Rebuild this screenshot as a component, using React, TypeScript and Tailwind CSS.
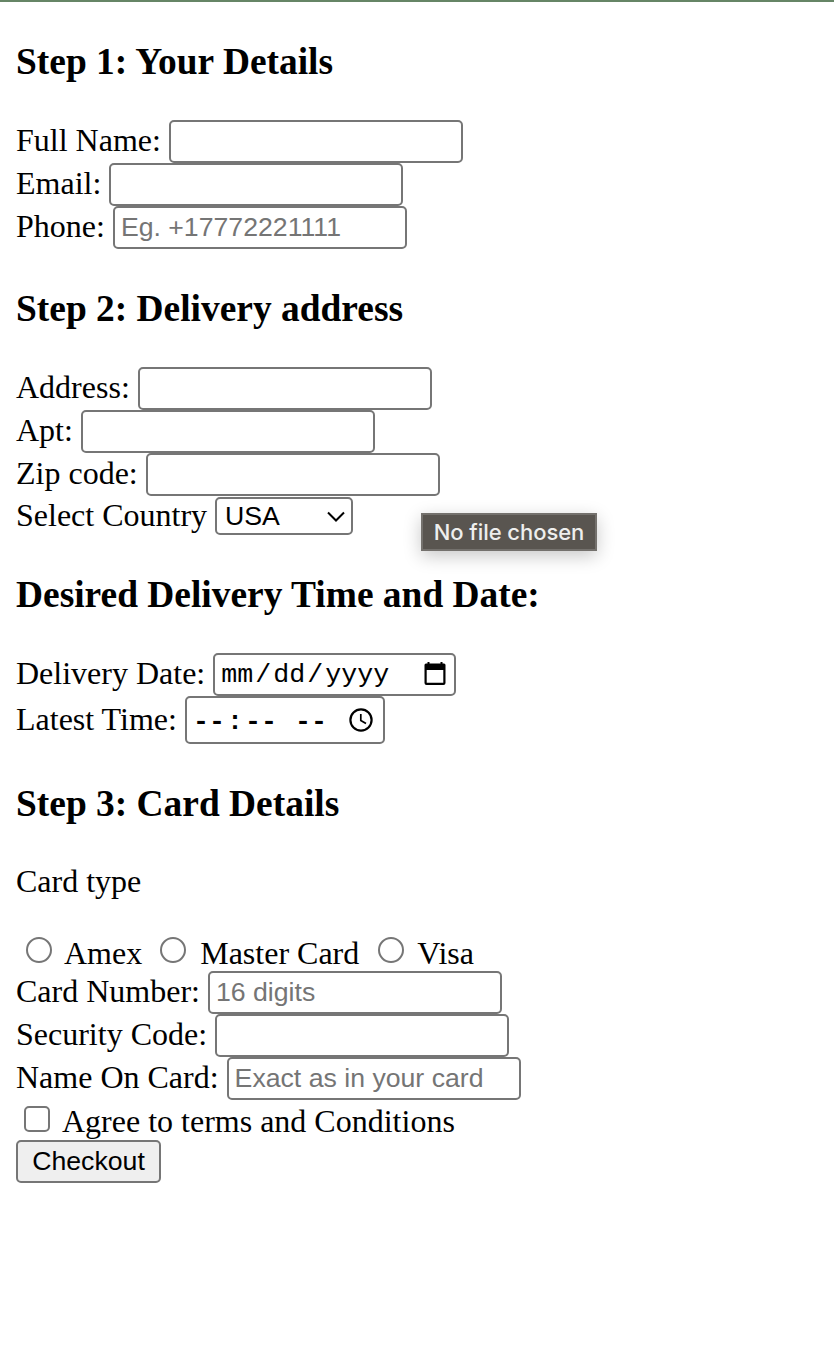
import type { ReactNode } from "react";

function Heading({ className, children }: { className: string; children: ReactNode }) {
  return <h3 className={`text-[37.44px] leading-[43px] font-bold whitespace-nowrap ${className}`}>{children}</h3>;
}

function TextRow({ label, placeholder }: { label: string; placeholder?: string }) {
  return (
    <label className="flex h-[43px] items-start leading-10 whitespace-nowrap">
      {label}
      <input
        type="text"
        placeholder={placeholder}
        className="ml-2 h-[43px] w-[294px] rounded-[5px] border-2 border-[#767676] bg-white px-1.5 pb-px font-['Liberation_Sans',Arial,sans-serif] text-[26.67px] leading-8 placeholder:text-[#757575]"
      />
    </label>
  );
}

function CalendarIcon() {
  return (
    <svg width="22" height="24" viewBox="0 0 22 24" fill="none">
      <path d="M4.500 0v4M17.500 0v4" stroke="#000" strokeWidth="2" />
      <path d="M2 1.500h18a1.500 1.500 0 0 1 1.500 1.500V21a2 2 0 0 1-2 2h-17a2 2 0 0 1-2-2V3A1.500 1.500 0 0 1 2 1.500ZM2.700 8v12.800h16.600V8Z" fill="#000" fillRule="evenodd" />
    </svg>
  );
}

function ClockIcon() {
  return (
    <svg width="24" height="24" viewBox="0 0 24 24" fill="none" stroke="#000">
      <circle cx="12" cy="12" r="10.600" strokeWidth="2.200" />
      <path d="M11.800 6v6.500l5.200 3.100" strokeWidth="1.700" />
    </svg>
  );
}

function Radio({ label, className }: { label: string; className: string }) {
  return (
    <label className={`flex items-start ${className}`}>
      <input type="radio" name="card" className="mt-0.5 size-[26px] shrink-0 appearance-none rounded-full border-2 border-[#767676] bg-white" />
      {label}
    </label>
  );
}

export default function App() {
  return (
    <main className="relative h-[1346px] w-[834px] overflow-hidden border-t-2 border-[#668566] bg-white pl-4 font-['Liberation_Serif','Times_New_Roman',serif] text-[32px] text-black">
      <form>
        <Heading className="mt-[38px]">Step 1: Your Details</Heading>
        <div className="mt-[37px]">
          <TextRow label="Full Name:" />
          <TextRow label="Email:" />
          <TextRow label="Phone:" placeholder="Eg. +17772221111" />
        </div>

        <Heading className="mt-[38px]">Step 2: Delivery address</Heading>
        <div className="mt-[37px]">
          <TextRow label="Address:" />
          <TextRow label="Apt:" />
          <TextRow label="Zip code:" />
          <div className="flex h-[39px] items-start leading-[38px] whitespace-nowrap">
            Select Country
            <button type="button" className="mt-px ml-2 flex h-[38px] w-[138px] items-center justify-between rounded-[5px] border-2 border-[#767676] bg-white pr-1.5 pb-px pl-2 font-['Liberation_Sans',Arial,sans-serif] text-[26.67px] leading-8">
              <span>USA</span>
              <svg width="18" height="12" viewBox="0 0 18 12" fill="none">
                <path d="m1 2.500 8 8 8-8" stroke="#000" strokeWidth="2" />
              </svg>
            </button>
          </div>
        </div>

        <Heading className="mt-[38px]">Desired Delivery Time and Date:</Heading>
        <div className="mt-[37px]">
          <div className="flex h-[43px] items-start leading-10 whitespace-nowrap">
            Delivery Date:
            <div className="ml-2 flex h-[43px] w-[243px] items-center justify-between rounded-[5px] border-2 border-[#767676] pr-2 pb-px pl-1.5">
              <div className="flex gap-0.5 pt-0.5 font-['Liberation_Mono','Courier_New',monospace] text-[26.67px] leading-8">
                <span>mm</span>
                <span>/</span>
                <span>dd</span>
                <span>/</span>
                <span>yyyy</span>
              </div>
              <CalendarIcon />
            </div>
          </div>
          <div className="flex h-[48px] items-start leading-[46px] whitespace-nowrap">
            Latest Time:
            <div className="ml-2 flex h-[48px] w-[200px] items-center justify-between rounded-[5px] border-2 border-[#767676] pr-2.5 pl-1.5">
              <div className="flex gap-0.5 pt-1 font-['Liberation_Mono','Courier_New',monospace] text-[26.67px] leading-8 font-bold">
                <span>--</span>
                <span>:</span>
                <span>--</span>
                <span className="ml-4">--</span>
              </div>
              <ClockIcon />
            </div>
          </div>
        </div>

        <Heading className="mt-[38px]">Step 3: Card Details</Heading>
        <p className="mt-[37px] leading-[38px]">Card type</p>
        <div className="mt-[35px] flex h-9 items-start leading-[37px] whitespace-nowrap">
          <Radio label="Amex" className="ml-[10px] gap-3" />
          <Radio label="Master Card" className="ml-[18px] gap-3.5" />
          <Radio label="Visa" className="ml-[19px] gap-[13px]" />
        </div>
        <TextRow label="Card Number:" placeholder="16 digits" />
        <TextRow label="Security Code:" />
        <TextRow label="Name On Card:" placeholder="Exact as in your card" />
        <label className="flex h-10 items-start pl-2 leading-[43px] whitespace-nowrap">
          <input type="checkbox" className="mt-1.5 mr-3 size-[26px] shrink-0 appearance-none rounded-[5px] border-2 border-[#767676] bg-white" />
          Agree to terms and Conditions
        </label>
        <button type="button" className="block h-[43px] w-[145px] rounded-[5px] border-2 border-[#767676] bg-[#efefef] pb-0.5 text-center font-['Liberation_Sans',Arial,sans-serif] text-[26.67px] leading-8">
          Checkout
        </button>
      </form>

      <div role="tooltip" className="absolute top-[511px] left-[421px] flex h-[38px] w-[176px] items-center justify-center border-2 border-[#74716d] bg-[#595550] font-[Inter,sans-serif] text-[22px] leading-7 font-medium tracking-[-0.05px] whitespace-nowrap text-[#eeeeed] shadow-[0_5px_18px_rgba(0,0,0,0.22)]">
        No file chosen
      </div>
    </main>
  );
}
